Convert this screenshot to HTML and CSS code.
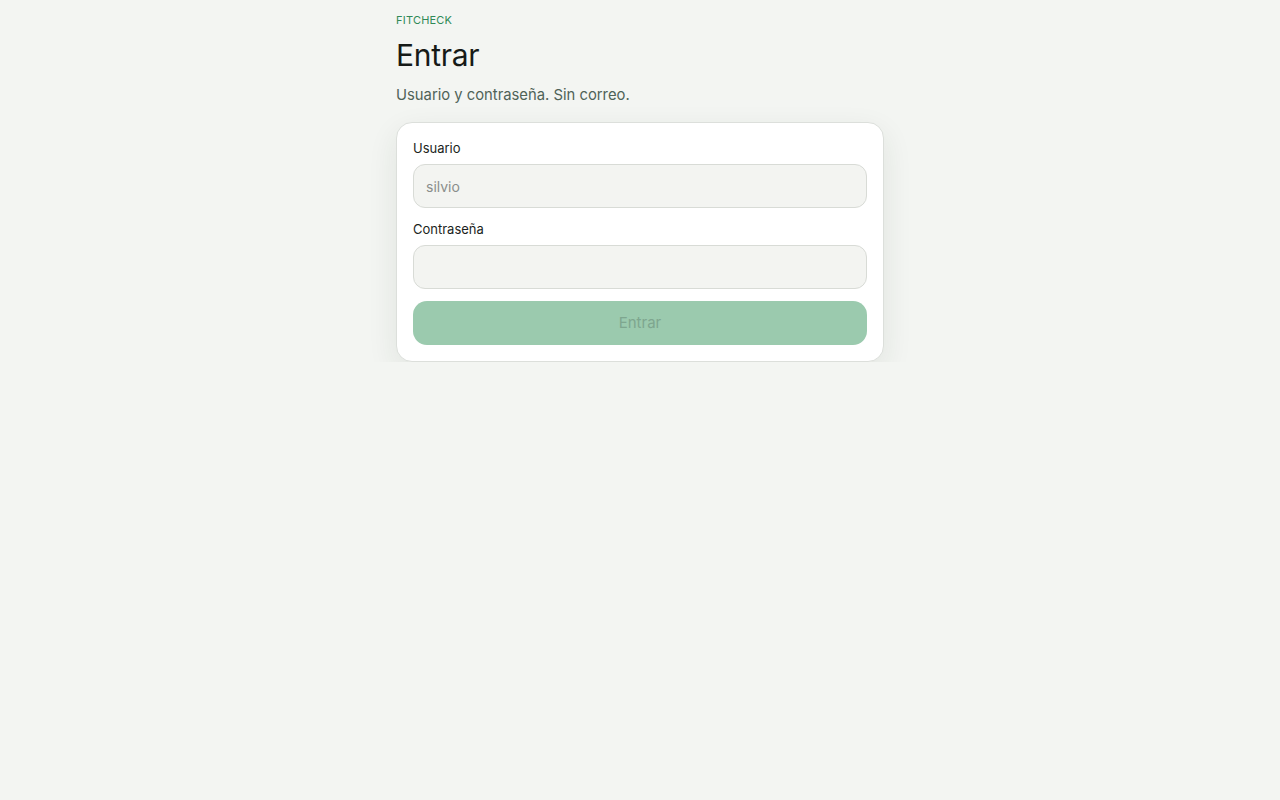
FILE: index.html
```html
<!DOCTYPE html>
<html lang="es">
<head>
    <meta charset="UTF-8">
    <meta name="viewport" content="width=device-width, initial-scale=1.0">
    <title>Entrar - FitCheck</title>
    <link rel="stylesheet" href="styles.css">
</head>
<body>
    <main class="login-container">
        <div class="brand">FITCHECK</div>
        <h1 class="login-title">Entrar</h1>
        <p class="login-subtitle">Usuario y contraseña. Sin correo.</p>

        <form class="login-card" onsubmit="return false;">
            <label class="field-label" for="username">Usuario</label>
            <input class="field-input" id="username" type="text" placeholder="silvio">

            <label class="field-label" for="password">Contraseña</label>
            <input class="field-input" id="password" type="password">

            <button class="login-btn" type="submit" disabled>Entrar</button>
        </form>
    </main>
</body>
</html>
```

FILE: styles.css
```css
:root {
    --bg-color: #f3f5f2;
    --accent-color: #2f8a57;
    --text-color: #161a17;
    --muted-color: #4f6257;
}

body {
    font-family: Inter, "Liberation Sans", Arial, sans-serif;
    margin: 0;
    padding: 0;
    background-color: var(--bg-color);
    color: var(--text-color);
}

.login-container {
    width: 488px;
    margin: 0 auto;
    padding-top: 12px;
}

.brand {
    font-size: 11px;
    line-height: 16px;
    letter-spacing: 0.02em;
    color: var(--accent-color);
}

.login-title {
    margin: 8px 0 0;
    font-size: 30px;
    line-height: 38px;
    font-weight: 400;
    letter-spacing: -0.01em;
}

.login-subtitle {
    margin: 10px 0 0;
    font-size: 14.8px;
    line-height: 22px;
    color: var(--muted-color);
}

.login-card {
    display: flex;
    flex-direction: column;
    margin-top: 16px;
    padding: 16px;
    background: white;
    border: 1px solid #dcdfdb;
    border-radius: 16px;
    box-shadow: 0 10px 30px rgba(30, 50, 35, 0.09);
}

.field-label {
    font-size: 13px;
    line-height: 18px;
    color: #1b1f1c;
}

.field-input {
    box-sizing: border-box;
    height: 44px;
    margin: 7px 0 12px;
    padding: 0 12px;
    font-family: inherit;
    font-size: 14px;
    color: var(--text-color);
    background: #f3f4f1;
    border: 1px solid #d8dbd6;
    border-radius: 12px;
    outline: none;
}

.field-input::placeholder {
    color: #8a8e8b;
}

.login-btn {
    height: 44px;
    padding-bottom: 2px;
    font-family: inherit;
    font-size: 15px;
    color: #7ea68f;
    background: #9bcaae;
    border: none;
    border-radius: 14px;
    cursor: not-allowed;
}
```
